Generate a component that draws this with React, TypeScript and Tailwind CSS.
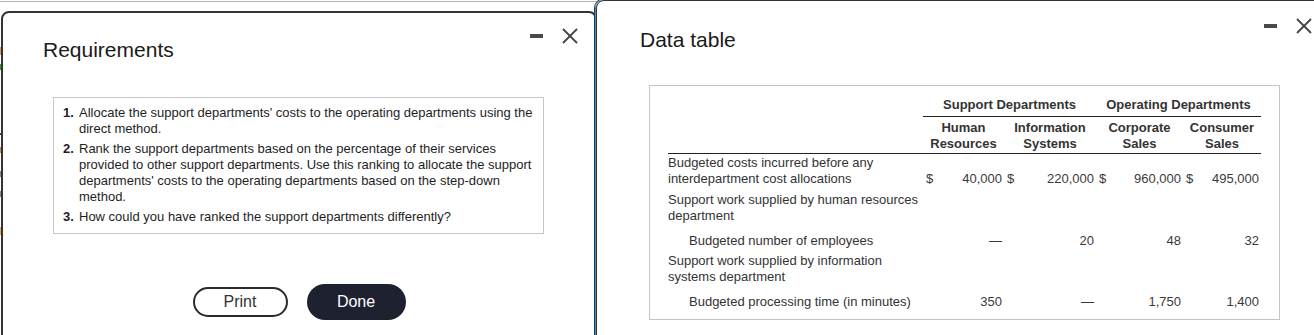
import React from "react";

const FONT = "font-['Liberation_Sans',Arial,sans-serif]";
const COLS = "grid grid-cols-[255px_81px_92px_87px_78px] w-[593px]";

function Controls() {
  return (
    <div className="flex items-center gap-[19px]">
      <div className="w-[13px] h-[4px] bg-[#4a4a4a]" />
      <svg width="16" height="16" viewBox="0 0 16 16">
        <line x1="1" y1="1" x2="15" y2="15" stroke="#444" strokeWidth="1.8" />
        <line x1="15" y1="1" x2="1" y2="15" stroke="#444" strokeWidth="1.8" />
      </svg>
    </div>
  );
}

function Money({ v }: { v: string }) {
  return (
    <div className="flex justify-between self-end pl-[3px] pr-[2px] text-[#3a3a3a] whitespace-nowrap">
      <span>$</span>
      <span>{v}</span>
    </div>
  );
}

function Num({ v }: { v: string }) {
  return <div className="self-end text-right pr-[2px] text-[#3a3a3a]">{v}</div>;
}

export default function App() {
  return (
    <div className={`relative w-[1314px] h-[335px] overflow-hidden bg-white ${FONT}`}>
      {/* background page hints */}
      <div className="absolute left-0 top-[1px] w-[600px] h-px bg-[#b4b4b4]" />
      <div className="absolute left-0 top-[47px] w-px h-[8px] bg-[#d9a04a]" />
      <div className="absolute left-0 top-[64px] w-px h-[6px] bg-[#3a9a3a]" />
      <div className="absolute left-0 top-[133px] w-px h-[2px] bg-[#444]" />
      <div className="absolute left-0 top-[147px] w-px h-[6px] bg-[#c89050]" />
      <div className="absolute left-0 top-[171px] w-px h-[6px] bg-[#888]" />
      <div className="absolute left-0 top-[191px] w-px h-[6px] bg-[#888]" />
      <div className="absolute left-0 top-[227px] w-px h-[8px] bg-[#e0b060]" />

      {/* Requirements window */}
      <div className="absolute left-[1px] top-[11px] w-[596px] h-[400px] bg-white border-2 border-[#333] rounded-t-[8px]">
        <div className="flex justify-between items-start pl-[40px] pr-[17px]">
          <div className="pt-[25px] text-[21px] leading-[24px] text-[#1a1a1a]">Requirements</div>
          <div className="pt-[15px]">
            <Controls />
          </div>
        </div>
        <div className="ml-[50px] mt-[35px] w-[491px] border border-[#c6c6c6] pl-[9px] pt-[7px] pb-[8px] text-[13px] leading-[16px] text-[#1e1e1e] whitespace-nowrap">
          <div className="flex flex-col gap-[4px]">
            <div className="flex">
              <span className="w-[16px] shrink-0 font-bold">1.</span>
              <span>
                Allocate the support departments' costs to the operating departments using the
                <br />
                direct method.
              </span>
            </div>
            <div className="flex">
              <span className="w-[16px] shrink-0 font-bold">2.</span>
              <span>
                Rank the support departments based on the percentage of their services
                <br />
                provided to other support departments. Use this ranking to allocate the support
                <br />
                departments' costs to the operating departments based on the step-down
                <br />
                method.
              </span>
            </div>
            <div className="flex">
              <span className="w-[16px] shrink-0 font-bold">3.</span>
              <span>How could you have ranked the support departments differently?</span>
            </div>
          </div>
        </div>
        <div className="mt-[50px] flex justify-center items-center gap-[19px]">
          <button className="w-[95px] h-[30px] rounded-full border-2 border-[#2a2a2a] bg-white text-[16px] text-[#333]">
            Print
          </button>
          <button className="w-[99px] h-[36px] rounded-full bg-[#1e2230] text-[16px] text-white">
            Done
          </button>
        </div>
      </div>

      {/* Data table window */}
      <div className="absolute left-[594px] top-[-2px] w-[738px] h-[400px] border border-[#333] rounded-tl-[10px]">
        <div className="w-full h-full border border-[#3b8fd6] rounded-tl-[9px]">
          <div className="w-full h-full border border-[#333] rounded-tl-[8px] bg-white">
            <div className="flex justify-between items-start pl-[43px] pr-[17px]">
              <div className="pt-[27px] text-[21px] leading-[24px] text-[#1a1a1a]">Data table</div>
              <div className="pt-[17px]">
                <Controls />
              </div>
            </div>
            <div className="ml-[52px] mt-[33px] w-[631px] border border-[#c4c4c4] pl-[18px] pt-[11px] pb-[9px] text-[13px] leading-[16px] text-[#333]">
              {/* header row 1 */}
              <div className={COLS}>
                <div />
                <div className="col-span-4 grid grid-cols-[173px_165px] border-b border-[#222] pb-[3px] font-bold text-center text-[#333] whitespace-nowrap">
                  <div>Support Departments</div>
                  <div>Operating Departments</div>
                </div>
              </div>
              {/* header row 2 */}
              <div className={`${COLS} border-b border-[#222] pt-[3px] pb-[2px] font-bold text-center leading-[15.5px] text-[#333]`}>
                <div />
                <div>
                  Human
                  <br />
                  Resources
                </div>
                <div>
                  Information
                  <br />
                  Systems
                </div>
                <div>
                  Corporate
                  <br />
                  Sales
                </div>
                <div>
                  Consumer
                  <br />
                  Sales
                </div>
              </div>
              {/* row 1 */}
              <div className={`${COLS} pt-[1px]`}>
                <div className="whitespace-nowrap">
                  Budgeted costs incurred before any
                  <br />
                  interdepartment cost allocations
                </div>
                <Money v="40,000" />
                <Money v="220,000" />
                <Money v="960,000" />
                <Money v="495,000" />
              </div>
              {/* row 2 */}
              <div className={`${COLS} pt-[5px]`}>
                <div className="whitespace-nowrap">
                  Support work supplied by human resources
                  <br />
                  department
                </div>
              </div>
              {/* row 3 */}
              <div className={`${COLS} pt-[9px]`}>
                <div className="pl-[21px] whitespace-nowrap">Budgeted number of employees</div>
                <Num v="—" />
                <Num v="20" />
                <Num v="48" />
                <Num v="32" />
              </div>
              {/* row 4 */}
              <div className={`${COLS} pt-[4px]`}>
                <div className="whitespace-nowrap">
                  Support work supplied by information
                  <br />
                  systems department
                </div>
              </div>
              {/* row 5 */}
              <div className={`${COLS} pt-[9px]`}>
                <div className="pl-[21px] whitespace-nowrap">Budgeted processing time (in minutes)</div>
                <Num v="350" />
                <Num v="—" />
                <Num v="1,750" />
                <Num v="1,400" />
              </div>
            </div>
          </div>
        </div>
      </div>
    </div>
  );
}
